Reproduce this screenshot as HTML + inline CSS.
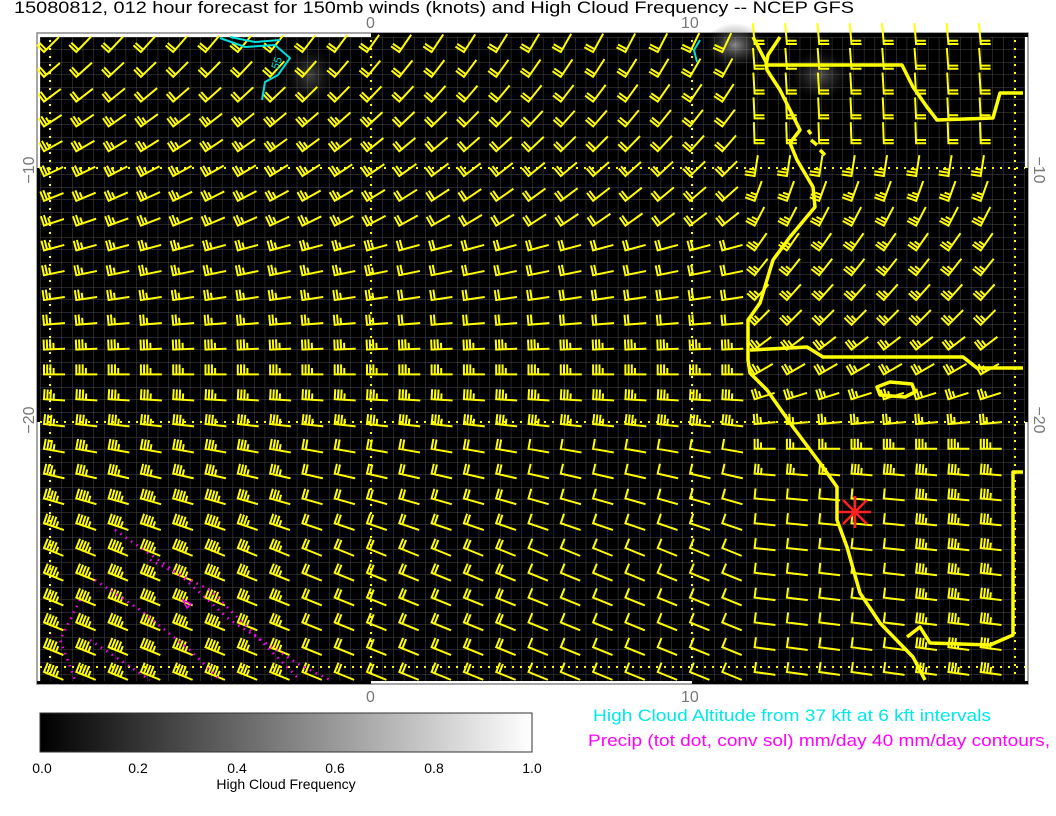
<!DOCTYPE html>
<html><head><meta charset="utf-8"><style>
body{margin:0;background:#fff;width:1056px;height:816px;overflow:hidden;font-family:"Liberation Sans",sans-serif;}
svg{position:absolute;left:0;top:0}
</style></head><body>
<svg id="s" width="1056" height="816" xmlns="http://www.w3.org/2000/svg">
<defs>
<linearGradient id="cb" x1="0" x2="1" y1="0" y2="0"><stop offset="0" stop-color="#000"/><stop offset="1" stop-color="#fff"/></linearGradient>
<radialGradient id="cl"><stop offset="0" stop-color="#aaa" stop-opacity=".8"/><stop offset="1" stop-color="#444" stop-opacity="0"/></radialGradient>
<pattern id="g" width="10.7" height="12.5" patternUnits="userSpaceOnUse" x="40" y="37"><path d="M0 0V12.5M0 0H10.7" stroke="#4a4a4a" stroke-width="1" fill="none"/></pattern>
</defs>
<text x="14" y="13" font-size="17" fill="#000" textLength="840" lengthAdjust="spacingAndGlyphs">15080812, 012 hour forecast for 150mb winds (knots) and High Cloud Frequency -- NCEP GFS</text>
<rect x="37" y="33" width="991" height="651" fill="#fff" stroke="#888" stroke-width="1.5"/>
<rect x="371" y="33" width="657" height="4" fill="#000"/>
<rect x="37" y="168" width="3" height="254" fill="#000"/>
<rect x="1025" y="168" width="3" height="254" fill="#000"/>
<rect x="37" y="681" width="334" height="3" fill="#000"/>
<rect x="692" y="681" width="336" height="3" fill="#000"/>
<rect x="40" y="37" width="985" height="644" fill="#000"/>
<rect x="40" y="37" width="985" height="644" fill="url(#g)"/>
<ellipse cx="735" cy="45" rx="30" ry="22" fill="url(#cl)"/>
<ellipse cx="820" cy="75" rx="30" ry="25" fill="url(#cl)" opacity=".6"/>
<ellipse cx="310" cy="75" rx="25" ry="30" fill="url(#cl)" opacity=".5"/>
<g stroke="#ffff00" stroke-width="2" stroke-dasharray="2 6" fill="none">
<path d="M50 40V680M371 40V680M692 40V680M1015 40V680M40 168H1025M40 422H1025M40 667H1025"/>
</g>
<g id="barbs" stroke="#ffff00" stroke-width="2" fill="none" stroke-linecap="square"></g>
<g stroke="#ffff00" stroke-width="3.5" fill="none" stroke-linejoin="round">
<path d="M753 37L766 62L767 70L780 90L800 130L790 143L797 160L813 187L815 207L790 237L773 260L760 303L748 320L748 360L750 373L767 390L793 427L820 463L837 487L837 520L847 547L860 593L880 623L913 657L925 680"/>
<path d="M780 37L768 55L766 65L902 65L913 87L927 107L937 120L993 118L1000 93L1023 93"/>
<path d="M750 350L807 347L823 357L963 357L977 368L1023 368"/>
<path d="M1023 472L1013 472L1013 635L990 645L930 643L920 627L907 637"/>
<path d="M877 387L890 382L912 384L915 392L905 397L880 395Z"/>
<path d="M808 130l3 4M811 140l6 5M820 150l5 5"/>
</g>
<g stroke="#00e0e0" stroke-width="2" fill="none">
<path d="M220 38L245 47L275 45L290 58L278 75L265 82L262 100"/>
<path d="M230 37L255 42L280 40"/>
<path d="M700 40L694 50L697 62"/>
</g>
<text x="278" y="70" fill="#00e0e0" font-size="11" transform="rotate(-70 278 70)">55</text>
<g stroke="#ff00ff" stroke-width="2.5" stroke-dasharray="1.5 5" fill="none">
<path d="M115 530L180 575L230 620L300 665L330 680"/>
<path d="M95 580L140 610L190 650L220 680"/>
<path d="M150 560L210 590L260 640L300 680"/>
<path d="M90 640L120 660L150 680"/>
<path d="M80 600L60 640L75 680"/>
</g>
<path d="M183 600l8 4l-4 4z" stroke="#ff00ff" stroke-width="1.5" fill="none"/>
<g stroke="#ff2020" stroke-width="2.5">
<path d="M855 496V528M839 512H871M843 500L867 524M843 524L867 500"/>
</g>
<g fill="#777" font-size="16">
<text x="366" y="28">0</text><text x="681" y="28">10</text>
<text x="366" y="702">0</text><text x="681" y="702">10</text>
<text transform="translate(34 170) rotate(-90)" text-anchor="middle">−10</text>
<text transform="translate(34 420) rotate(-90)" text-anchor="middle">−20</text>
<text transform="translate(1034 170) rotate(90)" text-anchor="middle">−10</text>
<text transform="translate(1034 420) rotate(90)" text-anchor="middle">−20</text>
</g>
<rect x="40" y="713" width="492" height="39" fill="url(#cb)" stroke="#333"/>
<g font-size="14" fill="#000" text-anchor="middle">
<text x="42" y="773">0.0</text><text x="138" y="773">0.2</text><text x="237" y="773">0.4</text><text x="335" y="773">0.6</text><text x="434" y="773">0.8</text><text x="532" y="773">1.0</text>
<text x="286" y="789">High Cloud Frequency</text>
</g>
<text x="593" y="721" font-size="17" fill="#00e8e8" textLength="398" lengthAdjust="spacingAndGlyphs">High Cloud Altitude from 37 kft at 6 kft intervals</text>
<text x="588" y="746" font-size="17" fill="#ff00ff" textLength="462" lengthAdjust="spacingAndGlyphs">Precip (tot dot, conv sol) mm/day 40 mm/day contours,</text>
</svg>
<script>
(function(){
var g=document.getElementById('barbs'),d='';
function lerp(a,b,t){return a+(b-a)*t}
function tab(arr,r){for(var i=0;i<arr.length-1;i++){if(r<=arr[i+1][0]){var t=(r-arr[i][0])/(arr[i+1][0]-arr[i][0]);return lerp(arr[i][1],arr[i+1][1],t);}}return arr[arr.length-1][1];}
var L=[[0,-45],[5,-25],[8,-15],[11,-5],[13,0],[16,10],[20,22],[25,22]];
var R=[[0,-95],[4,-92],[6,-70],[8,-55],[11,-45],[13,-30],[15,-5],[17,5],[25,8]];
for(var r=0;r<26;r++){for(var c=0;c<30;c++){
 var x=44+c*32.3,y=52+r*24.8;
 var s,f,n;
 var right=c>=22;
 if(right){s=tab(R,r);f=(r<=4)?0:s-90;n=(r<5)?2:(r<16?3:(c<25?3:4));
   if(r>=18&&c<27)n=1;}
 else{var mid=c/21;s=tab(L,r)+ (r<8?mid*(-20):0);f=s-90;
   n=r<3?2:(r<12?3:4); if(r>=16&&c>=8)n=(c>14?1:2); if(r>=18&&c<6)n=5; if(r<12&&c>10)n=2;}
 if(r<=4&&right){y-=8;}
 var a=s*Math.PI/180,b=f*Math.PI/180,len=20,fl=9;
 var bx=x+len*Math.cos(a),by=y+len*Math.sin(a);
 d+='M'+x.toFixed(1)+' '+y.toFixed(1)+'L'+bx.toFixed(1)+' '+by.toFixed(1);
 for(var k=0;k<n;k++){var px=x+k*3.2*Math.cos(a),py=y+k*3.2*Math.sin(a);var l=(k==n-1&&n>2)?fl*0.6:fl;
  d+='M'+px.toFixed(1)+' '+py.toFixed(1)+'l'+(l*Math.cos(b)).toFixed(1)+' '+(l*Math.sin(b)).toFixed(1);}
}}
var p=document.createElementNS('http://www.w3.org/2000/svg','path');p.setAttribute('d',d);g.appendChild(p);
})();
</script>
</body></html>
